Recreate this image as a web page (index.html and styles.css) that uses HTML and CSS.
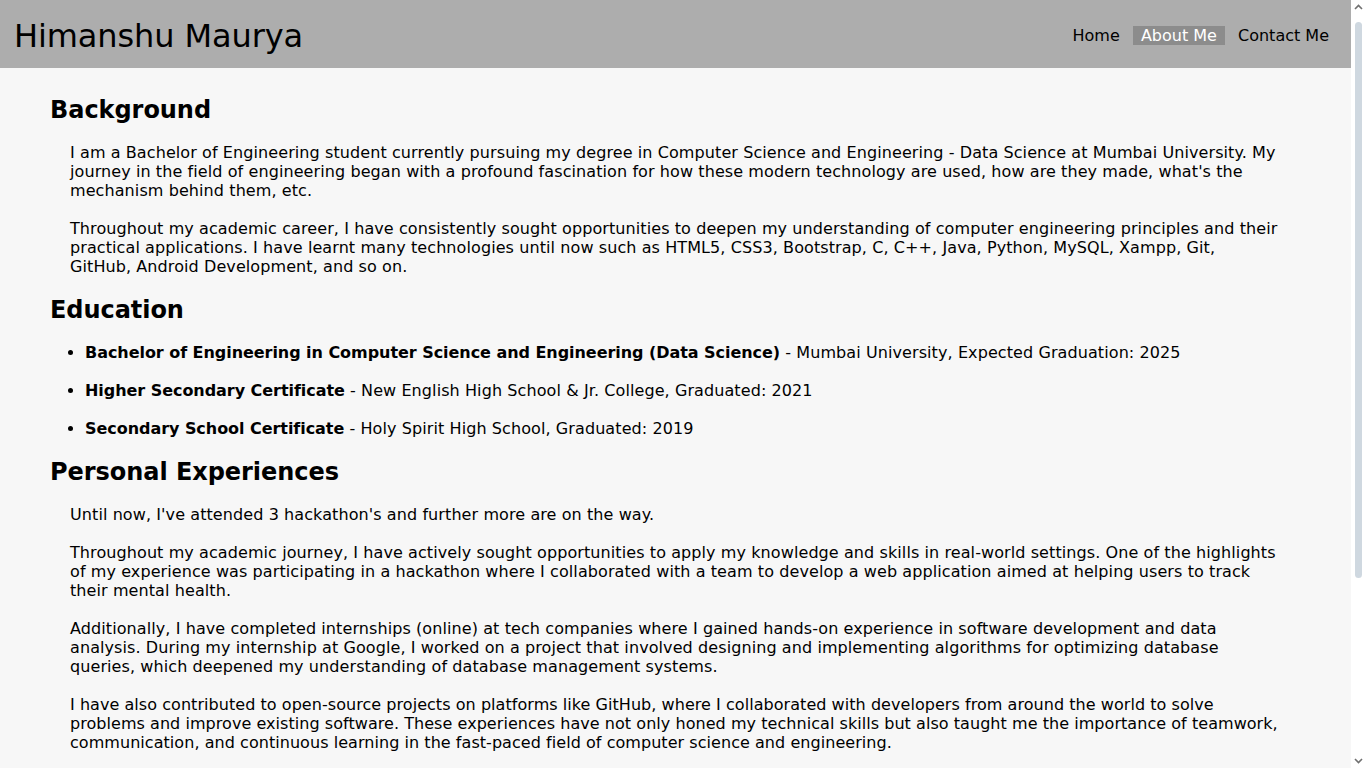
FILE: index.html
```html
<!DOCTYPE html>
<html lang="en">
<head>
<meta charset="utf-8">
<title>About Me - Himanshu Maurya</title>
<link rel="stylesheet" href="styles.css">
</head>
<body>
<div class="page">
<header class="site-header">
  <h1 class="site-title">Himanshu Maurya</h1>
  <nav class="site-nav">
    <a class="nav-link" href="#">Home</a>
    <a class="nav-link active" href="#">About Me</a>
    <a class="nav-link" href="#">Contact Me</a>
  </nav>
</header>
<main class="content">
  <section>
    <h2 class="section-title">Background</h2>
    <p class="text">I am a Bachelor of Engineering student currently pursuing my degree in Computer Science and Engineering - Data Science at Mumbai University. My journey in the field of engineering began with a profound fascination for how these modern technology are used, how are they made, what's the mechanism behind them, etc.</p>
    <p class="text">Throughout my academic career, I have consistently sought opportunities to deepen my understanding of computer engineering principles and their practical applications. I have learnt many technologies until now such as HTML5, CSS3, Bootstrap, C, C++, Java, Python, MySQL, Xampp, Git, GitHub, Android Development, and so on.</p>
  </section>
  <section>
    <h2 class="section-title">Education</h2>
    <ul class="edu-list">
      <li class="edu-item"><strong>Bachelor of Engineering in Computer Science and Engineering (Data Science)</strong> - Mumbai University, Expected Graduation: 2025</li>
      <li class="edu-item"><strong>Higher Secondary Certificate</strong> - New English High School &amp; Jr. College, Graduated: 2021</li>
      <li class="edu-item"><strong>Secondary School Certificate</strong> - Holy Spirit High School, Graduated: 2019</li>
    </ul>
  </section>
  <section>
    <h2 class="section-title">Personal Experiences</h2>
    <p class="text">Until now, I've attended 3 hackathon's and further more are on the way.</p>
    <p class="text">Throughout my academic journey, I have actively sought opportunities to apply my knowledge and skills in real-world settings. One of the highlights of my experience was participating in a hackathon where I collaborated with a team to develop a web application aimed at helping users to track their mental health.</p>
    <p class="text">Additionally, I have completed internships (online) at tech companies where I gained hands-on experience in software development and data analysis. During my internship at Google, I worked on a project that involved designing and implementing algorithms for optimizing database queries, which deepened my understanding of database management systems.</p>
    <p class="text text-tight">I have also contributed to open-source projects on platforms like GitHub, where I collaborated with developers from around the world to solve problems and improve existing software. These experiences have not only honed my technical skills but also taught me the importance of teamwork, communication, and continuous learning in the fast-paced field of computer science and engineering.</p>
  </section>
</main>
</div>
<div class="scrollbar" aria-hidden="true">
  <svg class="sb-arrow" width="15" height="15" viewBox="0 0 15 15"><path d="M4 9 L7.5 5.5 L11 9" fill="none" stroke="#707070" stroke-width="1.6"/></svg>
  <div class="sb-track"><div class="sb-thumb"></div></div>
  <svg class="sb-arrow" width="15" height="15" viewBox="0 0 15 15"><path d="M4 6 L7.5 9.5 L11 6" fill="none" stroke="#707070" stroke-width="1.6"/></svg>
</div>
</body>
</html>
```

FILE: styles.css
```css
html, body {
  margin: 0;
  padding: 0;
}

body {
  background: #f7f7f7;
  color: #000;
  font-family: "DejaVu Sans", Verdana, sans-serif;
  font-size: 16px;
  line-height: 19px;
}

.page {
  margin-right: 15px;
}

.site-header {
  box-sizing: border-box;
  display: flex;
  align-items: center;
  justify-content: space-between;
  height: 68px;
  padding: 3px 14px 0 14px;
  background: #adadad;
}

.site-title {
  margin: 0;
  font-size: 32px;
  font-weight: normal;
  line-height: 38px;
  letter-spacing: -0.1px;
}

.site-nav {
  font-size: 16px;
}

.nav-link {
  color: #000;
  text-decoration: none;
  padding: 0 8px;
}

.nav-link.active {
  background: #8c8c8c;
  color: #fff;
}

.content {
  padding: 7.5px 50px 250px 50px;
}

.section-title {
  font-size: 24px;
  line-height: 26px;
  padding-top: 2px;
  font-weight: bold;
  margin: 19.5px 0;
  letter-spacing: -0.05px;
}

.text {
  margin: 19px 20px;
  letter-spacing: 0.09px;
}

.text-tight {
  letter-spacing: 0.05px;
}

.edu-list {
  margin: 19.5px 0;
  padding-left: 35px;
  letter-spacing: 0.09px;
}

.edu-list strong {
  letter-spacing: -0.05px;
}

.edu-item {
  margin: 0 0 19px 0;
}

.edu-item:last-child {
  margin-bottom: 0;
}

.scrollbar {
  position: fixed;
  top: 0;
  right: 0;
  width: 15px;
  height: 100vh;
  background: #ffffff;
  display: flex;
  flex-direction: column;
}

.sb-arrow {
  display: block;
  flex: none;
}

.sb-track {
  flex: 1;
  padding: 7px 4px 0 4px;
}

.sb-thumb {
  height: 556px;
  background: #cfd8e0;
  border-radius: 4px;
}
```
